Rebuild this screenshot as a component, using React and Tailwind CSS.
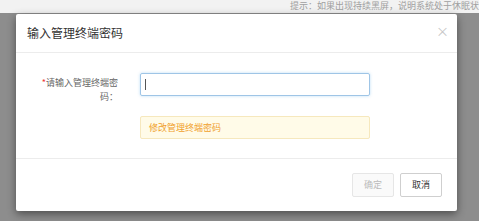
export default function App() {
  const font = { fontFamily: '"Noto Sans CJK SC", "Noto Sans", sans-serif' };
  return (
    <div className="relative w-[479px] h-[221px] overflow-hidden bg-[#8d8d8d]" style={font}>
      <div className="h-[13px] bg-[#f2f2f2] pl-[290px] text-[9px] leading-[11px] text-[#a0a0a0] whitespace-nowrap overflow-hidden">
        提示：如果出现持续黑屏，说明系统处于休眠状态
      </div>
      <div className="absolute left-[16px] top-[14px] w-[441px] h-[197px] bg-white rounded-[2px] shadow-[0_3px_9px_rgba(0,0,0,0.45)] flex flex-col">
        <div className="h-[39px] border-b border-[#ececec] flex items-center justify-between pl-[11px] pr-[8px]">
          <span className="text-[12px] text-[#333] leading-none">输入管理终端密码</span>
          <span className="text-[13px] text-[#c6c6c6] leading-none -mt-[6px]">×</span>
        </div>
        <div className="h-[105px] pt-[20px] flex flex-col">
          <div className="flex items-start h-[23px]">
            <div className="ml-[22px] w-[80px] pt-[3px] text-right text-[9px] leading-[14px] text-[#666]">
              <span className="text-[#e33]">*</span>请输入管理终端密码：
            </div>
            <div className="ml-[22px] w-[230px] h-[23px] border border-[#9fc5e6] rounded-[2px] shadow-[0_0_3px_rgba(102,175,233,0.45)] flex items-center pl-[4px]">
              <div className="w-px h-[11px] bg-[#555]"></div>
            </div>
          </div>
          <div className="ml-[124px] mt-[20px] w-[230px] h-[23px] bg-[#fffbe8] border border-[#f6e8bd] rounded-[2px] flex items-center pl-[8px] text-[9px] text-[#f0a02c] leading-none">
            修改管理终端密码
          </div>
        </div>
        <div className="border-t border-[#ececec] flex-1 flex items-start justify-end pt-[14px] pr-[15px] gap-[6px]">
          <div className="w-[42px] h-[24px] border border-[#e6e6e6] rounded-[2px] bg-[#fafafa] flex items-center justify-center text-[9px] text-[#bbb]">确定</div>
          <div className="w-[42px] h-[24px] border border-[#cfcfcf] rounded-[2px] bg-white flex items-center justify-center text-[9px] text-[#333]">取消</div>
        </div>
      </div>
    </div>
  );
}
